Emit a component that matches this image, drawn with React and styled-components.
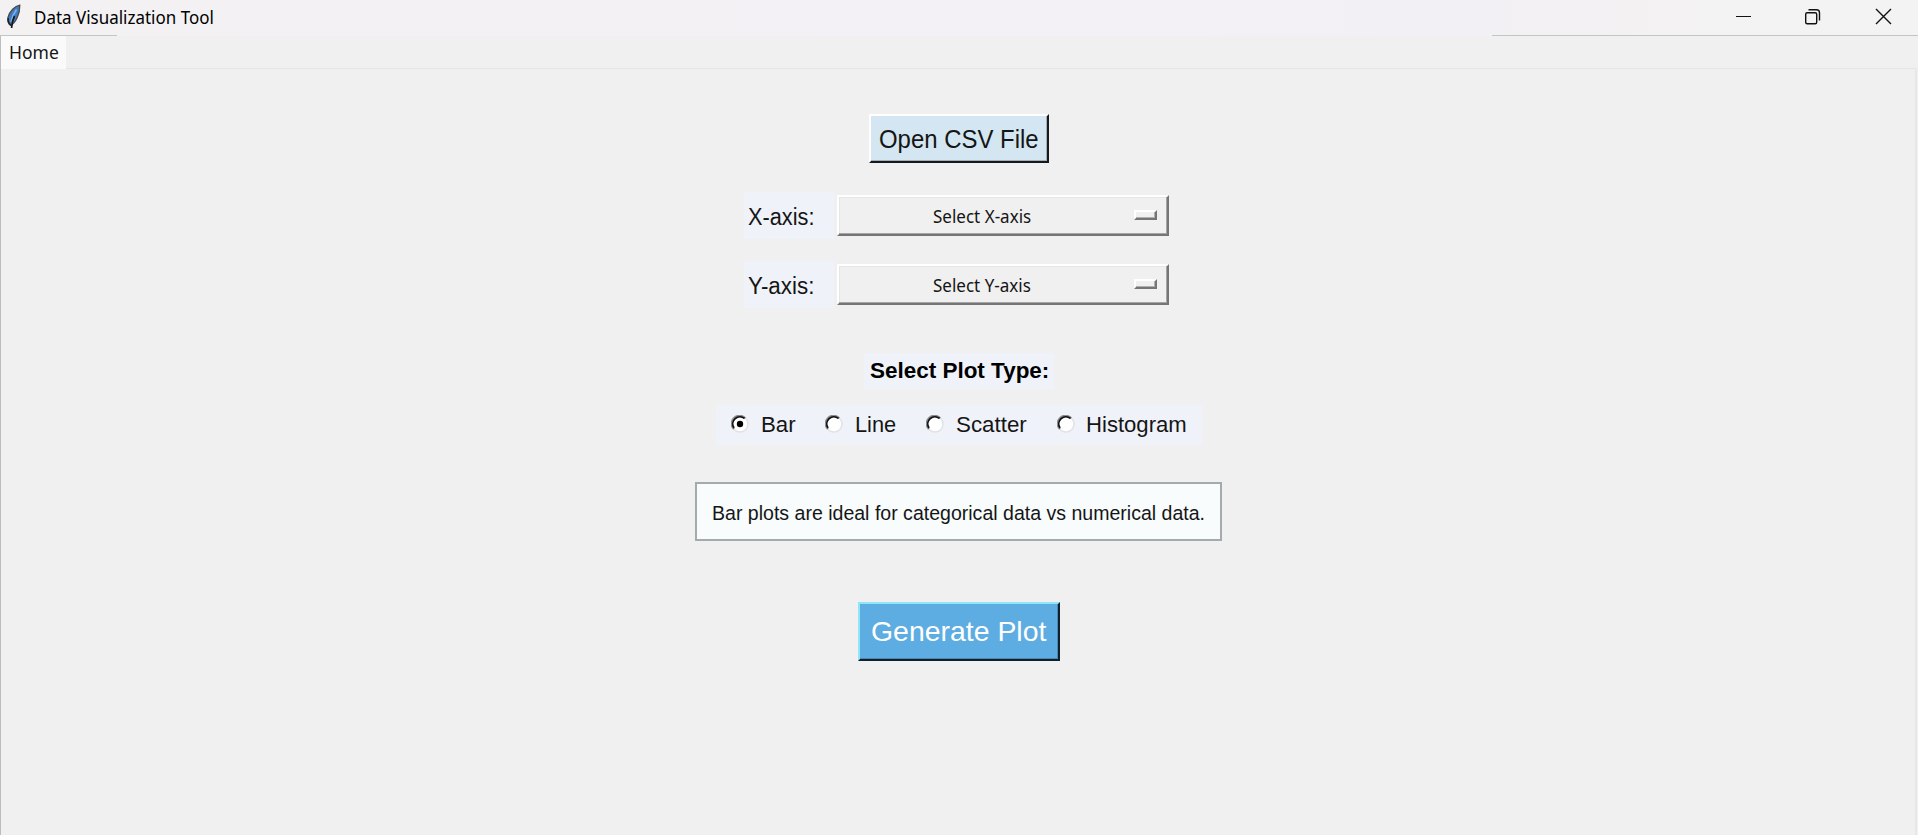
import React, { useState } from "react";
import styled, { createGlobalStyle } from "styled-components";

const Global = createGlobalStyle`
  * { box-sizing: border-box; }
  html, body { margin: 0; height: 100%; background: #f0f0f0; overflow: hidden; }
  button { margin: 0; padding: 0; border: 0; border-radius: 0; background: none; text-align: left; color: inherit; }
`;

const Window = styled.div`
  display: flex;
  flex-direction: column;
  width: 100%;
  height: 100vh;
  color: #151515;
  font-family: "Liberation Sans", Arial, sans-serif;
`;

const Text = styled.span`
  display: block;
  flex: none;
  white-space: nowrap;
  font-family: ${(p) => (p.$ui ? '"Noto Sans", "Open Sans", sans-serif' : "inherit")};
  font-size: ${(p) => p.$size}px;
  font-weight: ${(p) => (p.$bold ? 700 : 400)};
  line-height: 30px;
  transform: scaleX(${(p) => p.$stretch || 1});
  transform-origin: left center;
`;

const TitleBar = styled.header`
  display: flex;
  align-items: flex-start;
  flex: none;
  height: 36px;
  padding-left: 6px;
  background:
    linear-gradient(#c4c4c4, #c4c4c4) 0 35px / 117px 1px no-repeat,
    linear-gradient(#c4c4c4, #c4c4c4) 100% 35px / 426px 1px no-repeat,
    linear-gradient(90deg, #f3f1f2 0%, #f3f1f5 50%, #f3f0f5 77%, #f4f1f3 85%, #f3f3f3 92%);
`;

const Feather = styled.svg`
  flex: none;
  width: 16px;
  height: 26px;
  margin-top: 3px;
`;

const Title = styled.div`
  flex: 1;
  padding: 2px 0 0 12px;
  color: #000;
`;

const Controls = styled.div`
  display: flex;
  gap: 54px;
  padding: 8px 26px 0 0;
`;

const ControlIcon = styled.svg`
  display: block;
  width: 17px;
  height: 17px;
  overflow: visible;
  fill: none;
  stroke: #111;
  stroke-width: 1.4;
`;

const Notebook = styled.div`
  display: flex;
  flex-direction: column;
  flex: 1;
  border-left: 1px solid #bdbdbd;
`;

const TabStrip = styled.nav`
  display: flex;
  flex: none;
  height: 33px;
  background: linear-gradient(#e5e5e5, #e5e5e5) 0 32px / 1915px 1px no-repeat;
`;

const Tab = styled.div`
  width: 65px;
  height: 33px;
  padding: 1px 0 0 8px;
  background: #fafafa;
`;

const Pane = styled.main`
  display: flex;
  flex-direction: column;
  align-items: center;
  flex: 1;
  width: 1916px;
  padding: 45px 0 0 2px;
  border-right: 2px solid #e7e7e7;
`;

const PushButton = styled.button`
  display: flex;
  align-items: center;
  width: ${(p) => p.$width}px;
  height: ${(p) => p.$height}px;
  padding-left: ${(p) => p.$inset}px;
  font-family: inherit;
  border: 2px solid;
  border-color: ${(p) => (p.$primary ? "#8fe6fb #12202b #12202b #8fe6fb" : "#fff #17191b #17191b #fff")};
  box-shadow: inset -1px -1px 0 ${(p) => (p.$primary ? "#4788b5" : "#a3b0b9")};
  background: ${(p) => (p.$primary ? "#5dade2" : "#d4e6f1")};
  color: ${(p) => (p.$primary ? "#fff" : "#151515")};
`;

const Fields = styled.div`
  display: grid;
  gap: 22px;
  margin: 29px 6px 0 0;
`;

const Field = styled.div`
  display: flex;
  align-items: flex-start;
  gap: 3px;
`;

const FieldLabel = styled.label`
  width: 90px;
  height: 47px;
  padding: 10px 0 0 4px;
  background: #eff3f9;
`;

const OptionMenu = styled.button`
  display: flex;
  justify-content: space-between;
  align-items: flex-start;
  width: 332px;
  height: 41px;
  margin-top: 3px;
  padding: 4px 10px 0 94px;
  border: 2px solid;
  border-color: #fff #757575 #757575 #fff;
  box-shadow: inset -1px -1px 0 #a5a5a5, inset 1px 1px 0 #e6e6e6;
`;

const Indicator = styled.i`
  width: 23px;
  height: 10px;
  margin-top: 9px;
  border: 2px solid;
  border-color: #fff #757575 #757575 #fff;
  box-shadow: inset -1px -1px 0 #b0b0b0;
`;

const Heading = styled.div`
  width: 190px;
  height: 36px;
  margin-top: 45px;
  padding: 3px 0 0 6px;
  background: #eff3f9;
  color: #000;
`;

const RadioGroup = styled.div`
  display: flex;
  width: 486px;
  height: 40px;
  margin-top: 16px;
  padding-left: 15px;
  background: #eff3f9;
`;

const Radio = styled.label`
  display: flex;
  align-items: flex-start;
  flex: none;
  width: ${(p) => p.$width}px;
  gap: ${(p) => p.$gap}px;
  padding-top: 5px;
`;

const Dial = styled.svg`
  flex: none;
  width: 18px;
  height: 18px;
  margin-top: 5px;
`;

const Note = styled.div`
  width: 527px;
  height: 59px;
  margin: 37px 2px 0 0;
  padding: 14px 0 0 15px;
  border: 2px solid #a4abad;
  background: #f8fcfd;
`;

const Actions = styled.div`
  margin-top: 61px;
`;

const PLOTS = [
  { name: "Bar", width: 94, gap: 12, stretch: 1.01 },
  { name: "Line", width: 101, gap: 12, stretch: 0.99 },
  { name: "Scatter", width: 131, gap: 12, stretch: 1.015 },
  { name: "Histogram", width: 130, gap: 11, stretch: 1.005 },
];

function RadioDial({ checked }) {
  return (
    <Dial viewBox="0 0 18 18">
      <circle cx="9" cy="9" r="8" fill="#fff" stroke="#e0e2e5" strokeWidth="1.500" />
      <path d="M2.900 14A7.600 7.600 0 0 1 14.200 3.200" fill="none" stroke="#8a8a8a" strokeWidth="2.200" />
      <path d="M3 13A7.200 7.200 0 0 1 13.500 3.400" fill="none" stroke="#111" strokeWidth="1.700" />
      {checked && <circle cx="9" cy="9" r="3.200" fill="#000" />}
    </Dial>
  );
}

export default function App() {
  const [plot, setPlot] = useState("Bar");
  return (
    <Window>
      <Global />
      <TitleBar>
        <Feather viewBox="0 0 16 26">
          <path d="M13.800 2.200C9 3 3.500 8 2 14.500C1.300 18 2.500 21 4.500 22.500C9.500 20 14 11 13.800 2.200z" fill="#3f7cc0" stroke="#4a4a4a" strokeWidth="1.300" />
          <path d="M10.500 6.500C8 10 6 14 5 19" fill="none" stroke="#7fb2ee" strokeWidth="1.600" />
          <path d="M8.500 13C7 16 6 19 5.600 25" fill="none" stroke="#15181d" strokeWidth="1.700" />
          <path d="M2.200 15C2 18 3 21 5 22" fill="none" stroke="#222" strokeWidth="1.400" />
        </Feather>
        <Title><Text $ui $size={17.5} $stretch={0.97}>Data Visualization Tool</Text></Title>
        <Controls>
          <ControlIcon viewBox="0 0 17 17"><path d="M3 8.500H18" strokeWidth="1" /></ControlIcon>
          <ControlIcon viewBox="0 0 17 17">
            <rect x="1.700" y="4.700" width="11" height="11" rx="1.500" />
            <path d="M4.500 1.700H12.500Q15.500 1.700 15.500 4.700V12.500" />
          </ControlIcon>
          <ControlIcon viewBox="0 0 17 17"><path d="M1 1L16 16M16 1L1 16" /></ControlIcon>
        </Controls>
      </TitleBar>
      <Notebook>
        <TabStrip><Tab><Text $ui $size={17.5}>Home</Text></Tab></TabStrip>
        <Pane>
          <PushButton $width={180} $height={49} $inset={8}>
            <Text $size={25} $stretch={0.957}>Open CSV File</Text>
          </PushButton>
          <Fields>
            {["X", "Y"].map((axis) => (
              <Field key={axis}>
                <FieldLabel>
                  <Text $size={23} $stretch={axis === "X" ? 0.945 : 0.973}>{axis}-axis:</Text>
                </FieldLabel>
                <OptionMenu>
                  <Text $ui $size={17.5} $stretch={0.972}>Select {axis}-axis</Text>
                  <Indicator />
                </OptionMenu>
              </Field>
            ))}
          </Fields>
          <Heading><Text $bold $size={22} $stretch={1.021}>Select Plot Type:</Text></Heading>
          <RadioGroup>
            {PLOTS.map((p) => (
              <Radio key={p.name} $width={p.width} $gap={p.gap} onClick={() => setPlot(p.name)}>
                <RadioDial checked={plot === p.name} />
                <Text $size={22} $stretch={p.stretch}>{p.name}</Text>
              </Radio>
            ))}
          </RadioGroup>
          <Note>
            <Text $size={20.5} $stretch={0.953}>Bar plots are ideal for categorical data vs numerical data.</Text>
          </Note>
          <Actions>
            <PushButton $primary $width={202} $height={59} $inset={11}>
              <Text $size={28} $stretch={1.015}>Generate Plot</Text>
            </PushButton>
          </Actions>
        </Pane>
      </Notebook>
    </Window>
  );
}
